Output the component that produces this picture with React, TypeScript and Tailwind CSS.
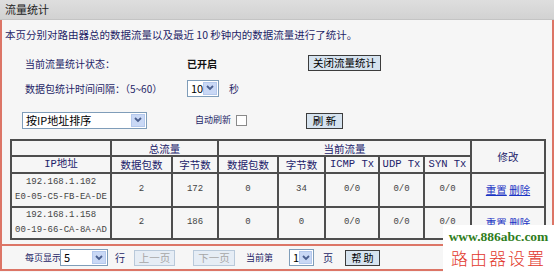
import React from 'react';

const cjk = "font-['Noto_Sans_CJK_SC',sans-serif]";
const mono = "font-['Liberation_Mono','Noto_Sans_CJK_SC',monospace]";

function Arrow() {
  return (
    <div className="flex items-center justify-center w-[14px] h-[13px] mr-[1px] bg-[#c9d8f5] border border-[#b4c8ec]">
      <svg width="8" height="6" viewBox="0 0 8 6">
        <path d="M1 1 L4 4 L7 1" stroke="#4a5f8f" strokeWidth="1.8" fill="none" />
      </svg>
    </div>
  );
}

function Select({ className, text }: { className: string; text: string }) {
  return (
    <div className={`flex items-center justify-between h-[17px] bg-white border border-[#7f9db9] ${className}`}>
      <span className="pl-[3px] text-[11px] leading-[15px] text-black whitespace-nowrap">{text}</span>
      <Arrow />
    </div>
  );
}

function Button({ children, className = '', disabled = false }: { children: React.ReactNode; className?: string; disabled?: boolean }) {
  return (
    <div
      className={`flex items-center justify-center h-[16px] text-[10.5px] leading-[14px] whitespace-nowrap ${
        disabled ? 'bg-[#e6edf5] border border-[#b9c9da] text-[#a6a6a6]' : 'bg-[#d6e3ef] border border-[#3c3c3c] text-black'
      } ${className}`}
    >
      {children}
    </div>
  );
}

const th = 'border-2 border-[#4e4e4e] font-normal text-[#22226a] text-[10.5px] leading-[13px] p-0 text-center';
const td = 'border-2 border-[#4e4e4e] text-[#444] text-[9px] p-0 text-center ' + mono;

const rows = [
  { ip: '192.168.1.102', mac: 'E0-05-C5-FB-EA-DE', p: '2', b: '172', cp: '0', cb: '34' },
  { ip: '192.168.1.158', mac: '00-19-66-CA-8A-AD', p: '2', b: '186', cp: '0', cb: '0' },
];

export default function App() {
  return (
    <div className={`relative w-[554px] h-[272px] overflow-hidden bg-[#f6f6f6] ${cjk}`}>
      <div className="h-[20px] pl-[5px] flex items-center bg-gradient-to-b from-[#dedede] to-[#d2d2d2] border-b border-[#c4c4c4] text-[11px] text-[#222]">
        流量统计
      </div>

      <div className="border-x-2 border-[#dc7566] h-[224px]">
        <div className="pt-[8px] pl-[3px] text-[10.5px] leading-[14px] text-[#1e1e66] whitespace-nowrap">
          本页分别对路由器总的数据流量以及最近 10 秒钟内的数据流量进行了统计。
        </div>

        <div className="mt-[12px] flex items-center h-[18px] text-[10px] text-[#1e1e66] whitespace-nowrap">
          <div className="w-[185px] pl-[23px]">当前流量统计状态：</div>
          <div className="w-[121px] font-bold text-[#111]">已开启</div>
          <Button className="w-[73px]">关闭流量统计</Button>
        </div>

        <div className="mt-[7px] flex items-center h-[18px] text-[10px] text-[#1e1e66] whitespace-nowrap">
          <div className="w-[185px] pl-[23px]">数据包统计时间间隔：（5~60）</div>
          <Select className="w-[32px]" text="10" />
          <div className="ml-[10px]">秒</div>
        </div>

        <div className="mt-[14px] flex items-center h-[18px] text-[9px] text-[#1e1e66] whitespace-nowrap">
          <div className="w-[193px] pl-[20px]">
            <Select className="w-[125px]" text="按IP地址排序" />
          </div>
          <div className="w-[41px]">自动刷新</div>
          <div className="w-[11px] h-[11px] bg-white border border-[#8a8a8a]" />
          <div className="w-[59px]" />
          <Button className="w-[37px] mt-[2px]">刷 新</Button>
        </div>

        <table className="mt-[10px] ml-[8px] w-[534px] border-collapse border-2 border-[#4e4e4e] bg-[#f6f6f6] table-fixed">
          <colgroup>
            <col className="w-[100px]" />
            <col className="w-[61px]" />
            <col className="w-[46px]" />
            <col className="w-[60px]" />
            <col className="w-[47px]" />
            <col className="w-[54px]" />
            <col className="w-[45px]" />
            <col className="w-[47px]" />
            <col className="w-[74px]" />
          </colgroup>
          <thead>
            <tr className="h-[16px]">
              <th className={th}></th>
              <th className={th} colSpan={2}>总流量</th>
              <th className={th} colSpan={5}>当前流量</th>
              <th className={th} rowSpan={2}>修改</th>
            </tr>
            <tr className="h-[17px]">
              <th className={`${th} ${mono} text-[9.5px]`}>IP地址</th>
              <th className={th}>数据包数</th>
              <th className={th}>字节数</th>
              <th className={th}>数据包数</th>
              <th className={th}>字节数</th>
              <th className={`${th} ${mono} text-[9px]`}>ICMP Tx</th>
              <th className={`${th} ${mono} text-[9px]`}>UDP Tx</th>
              <th className={`${th} ${mono} text-[9px]`}>SYN Tx</th>
            </tr>
          </thead>
          <tbody>
            {rows.map((r, i) => (
              <tr key={r.ip} className={i === 0 ? 'h-[34px]' : 'h-[32px]'}>
                <td className={`${td} leading-[15px]`}>
                  <div>{r.ip}</div>
                  <div>{r.mac}</div>
                </td>
                <td className={td}>{r.p}</td>
                <td className={td}>{r.b}</td>
                <td className={td}>{r.cp}</td>
                <td className={td}>{r.cb}</td>
                <td className={td}>0/0</td>
                <td className={td}>0/0</td>
                <td className={td}>0/0</td>
                <td className={`${td} ${cjk} text-[10.5px]`}>
                  <span className="text-[#1b35c4] underline">重置</span>{' '}
                  <span className="text-[#1b35c4] underline">删除</span>
                </td>
              </tr>
            ))}
          </tbody>
        </table>
      </div>

      <div className="border-x-2 border-t-2 border-b-2 border-[#dc7566] h-[27px] flex items-center text-[9px] text-[#1e1e66] whitespace-nowrap">
        <div className="pl-[23px] w-[58px]">每页显示</div>
        <Select className="w-[48px]" text="5" />
        <div className="ml-[7px] w-[19px] text-[10px]">行</div>
        <Button disabled className="w-[41px] text-[9.5px]">上一页</Button>
        <div className="w-[18px]" />
        <Button disabled className="w-[42px] text-[9.5px]">下一页</Button>
        <div className="ml-[11px] w-[43px]">当前第</div>
        <Select className="w-[25px]" text="1" />
        <div className="ml-[9px] w-[22px] text-[10px]">页</div>
        <Button className="w-[35px] text-[10px]">帮 助</Button>
      </div>

      <div className="absolute left-[443px] top-[225px] w-[111px] h-[47px] bg-white flex flex-col items-center">
        <div className="font-['Liberation_Serif',serif] font-bold text-[13.5px] leading-[18px] text-[#2f7d1c] mt-[3px] whitespace-nowrap">www.886abc.com</div>
        <div className="font-['Noto_Sans_CJK_SC',sans-serif] font-light text-[17px] leading-[22px] text-[#e2372c] tracking-[2px] mt-[1px] whitespace-nowrap">路由器设置</div>
      </div>
    </div>
  );
}
